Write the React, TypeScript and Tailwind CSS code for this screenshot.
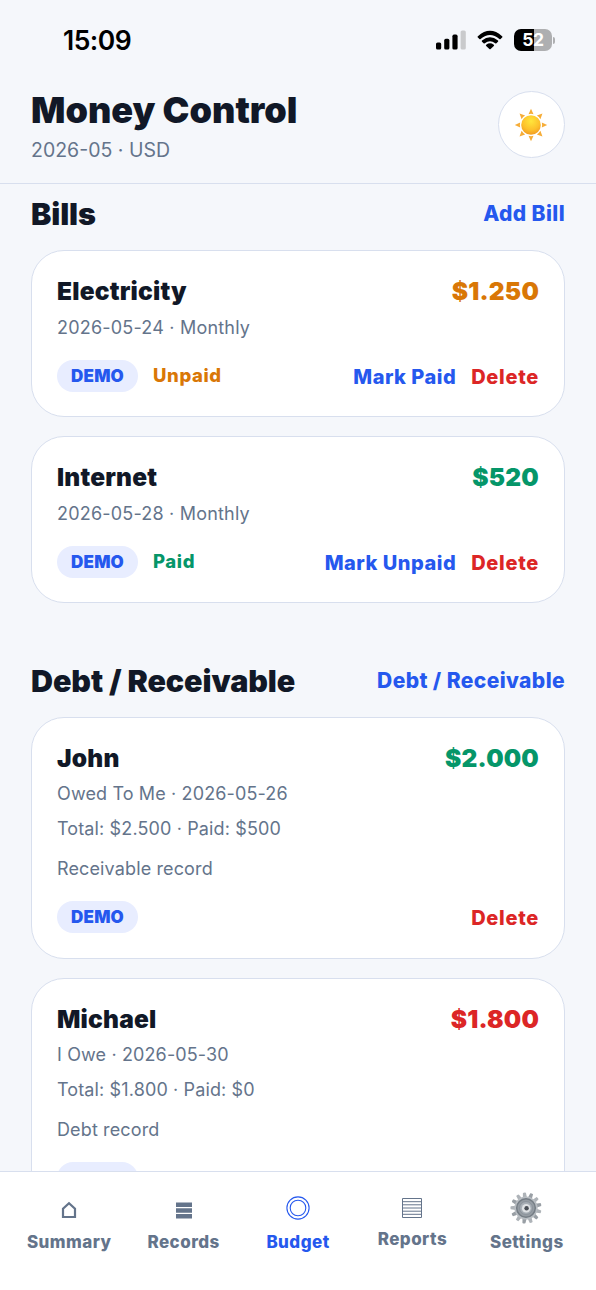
import type { ReactNode } from 'react'

type Tone = 'amber' | 'green' | 'red'

const toneClass: Record<Tone, string> = {
  amber: 'text-[#d97706]',
  green: 'text-[#059669]',
  red: 'text-[#dc2626]',
}

type Bill = {
  name: string
  amount: string
  due: string
  status: string
  tone: Tone
  action: string
}

type Debt = {
  name: string
  amount: string
  info: string
  totals: string
  note: string
  tone: Tone
}

const bills: Bill[] = [
  { name: 'Electricity', amount: '$1.250', due: '2026-05-24 · Monthly', status: 'Unpaid', tone: 'amber', action: 'Mark Paid' },
  { name: 'Internet', amount: '$520', due: '2026-05-28 · Monthly', status: 'Paid', tone: 'green', action: 'Mark Unpaid' },
]

const debts: Debt[] = [
  {
    name: 'John',
    amount: '$2.000',
    info: 'Owed To Me · 2026-05-26',
    totals: 'Total: $2.500 · Paid: $500',
    note: 'Receivable record',
    tone: 'green',
  },
  {
    name: 'Michael',
    amount: '$1.800',
    info: 'I Owe · 2026-05-30',
    totals: 'Total: $1.800 · Paid: $0',
    note: 'Debt record',
    tone: 'red',
  },
]

function StatusBar() {
  return (
    <div className="flex h-20 items-center justify-between pr-[41px] pl-[63px]">
      <span className="text-[26.5px] leading-8 font-semibold tracking-[-0.5px] text-black">15:09</span>
      <div className="flex items-center">
        <svg width="30" height="20" viewBox="0 0 30 20">
          <rect x="0" y="12.5" width="5.2" height="7" rx="1.6" />
          <rect x="8.2" y="8.8" width="5.2" height="10.7" rx="1.6" />
          <rect x="16.4" y="4.6" width="5.2" height="14.9" rx="1.6" />
          <rect x="24.6" y="0.5" width="5.2" height="19" rx="1.6" fill="#c9cacc" />
        </svg>
        <svg className="ml-[11px]" width="26" height="20" viewBox="0 0 26 20">
          <path d="M0.9 6.2 Q13 -4.6 25.1 6.2 Q25.8 6.9 25.1 7.5 L23.6 9 Q23 9.5 22.4 9 Q13 0.8 3.6 9 Q3 9.5 2.4 9 L0.9 7.5 Q0.2 6.9 0.9 6.2Z" />
          <path d="M5 10.5 Q13 3.9 21 10.5 Q21.6 11.1 21 11.7 L19.4 13.2 Q18.8 13.7 18.2 13.2 Q13 9.1 7.8 13.2 Q7.2 13.7 6.6 13.2 L5 11.7 Q4.4 11.1 5 10.5Z" />
          <path d="M9.2 14.7 Q13 12 16.8 14.7 Q17.4 15.3 16.8 15.9 L13.6 19 Q13 19.5 12.4 19 L9.2 15.9 Q8.6 15.3 9.2 14.7Z" />
        </svg>
        <div className="ml-[11px] flex h-[22px] w-[38px] items-center justify-center rounded-[7px] bg-[linear-gradient(90deg,#000_52%,#aeafb1_52%)] text-[17.5px] leading-none font-bold tracking-[-0.3px] text-white">
          52
        </div>
        <div className="ml-px h-[7px] w-[2px] rounded-r-full bg-[#aeafb1]" />
      </div>
    </div>
  )
}

function SunIcon() {
  return (
    <svg className="-ml-px" width="34" height="34" viewBox="0 0 34 34">
      <defs>
        <radialGradient id="sun" cx="0.5" cy="0.3" r="0.75">
          <stop offset="0" stopColor="#ffe63c" />
          <stop offset="0.6" stopColor="#fdc02b" />
          <stop offset="1" stopColor="#ee9420" />
        </radialGradient>
      </defs>
      {[0, 45, 90, 135, 180, 225, 270, 315].map((angle) => (
        <path key={angle} d="M17 0.8 L19.5 6.2 Q17 5.5 14.5 6.2Z" fill="#f6ac36" transform={`rotate(${angle} 17 17)`} />
      ))}
      <circle cx="17" cy="17" r="9.8" fill="url(#sun)" />
    </svg>
  )
}

function Header() {
  return (
    <header className="h-[184px] shrink-0 border-b border-[#d8dfee]">
      <StatusBar />
      <div className="flex justify-between px-[31px]">
        <div className="pt-2.5">
          <h1 className="text-[36px] leading-10 font-black text-[#111827]">Money Control</h1>
          <p className="mt-2 text-[19.5px] leading-6 text-[#64748b]">2026-05 · USD</p>
        </div>
        <button className="mt-[11px] flex size-[67px] items-center justify-center rounded-full border border-[#d8dfee] bg-white">
          <SunIcon />
        </button>
      </div>
    </header>
  )
}

function SectionHeader({ title, action }: { title: string; action: string }) {
  return (
    <div className="flex h-10 items-center justify-between">
      <h2 className="text-[30.5px] leading-10 font-black tracking-[-0.1px] text-[#111827]">{title}</h2>
      <button className="text-[21px] leading-7 font-extrabold tracking-[0.4px] text-[#2558ee]">{action}</button>
    </div>
  )
}

function Card({ name, amount, tone, children }: { name: string; amount: string; tone: Tone; children: ReactNode }) {
  return (
    <article className="rounded-[33px] border border-[#d8dfee] bg-white px-[25px] pt-6">
      <div className="flex h-8 items-center justify-between">
        <h3 className="text-[24.5px] font-black tracking-[0.2px] text-[#111827]">{name}</h3>
        <span className={`text-[24.5px] font-black tracking-[0.2px] ${toneClass[tone]}`}>{amount}</span>
      </div>
      {children}
    </article>
  )
}

function DemoPill() {
  return (
    <span className="flex h-8 w-[81px] items-center justify-center rounded-full bg-[#e8edff] pt-0.5 text-[17px] font-black tracking-[0.2px] text-[#2558ee]">
      DEMO
    </span>
  )
}

function BillCard({ bill }: { bill: Bill }) {
  return (
    <Card name={bill.name} amount={bill.amount} tone={bill.tone}>
      <p className="mt-[9px] text-[18px] leading-6 tracking-[0.2px] text-[#64748b]">{bill.due}</p>
      <div className="mt-5 mb-6 flex h-8 items-center">
        <DemoPill />
        <span className={`ml-[15px] text-[18.5px] font-extrabold tracking-[0.6px] ${toneClass[bill.tone]}`}>
          {bill.status}
        </span>
        <button className="ml-auto pt-px text-[20px] leading-8 font-extrabold tracking-[0.5px] text-[#2558ee]">
          {bill.action}
        </button>
        <button className="ml-[15px] pt-px text-[20px] leading-8 font-extrabold tracking-[0.7px] text-[#dc2626]">
          Delete
        </button>
      </div>
    </Card>
  )
}

function DebtCard({ debt }: { debt: Debt }) {
  return (
    <Card name={debt.name} amount={debt.amount} tone={debt.tone}>
      <div className="text-[18px] leading-6 tracking-[0.13px] text-[#64748b]">
        <p className="mt-2">{debt.info}</p>
        <p className="mt-[11px]">{debt.totals}</p>
        <p className="mt-4">{debt.note}</p>
      </div>
      <div className="mt-5 mb-[25px] flex h-8 items-center justify-between">
        <DemoPill />
        <button className="pt-0.5 text-[20px] leading-8 font-extrabold tracking-[0.7px] text-[#dc2626]">Delete</button>
      </div>
    </Card>
  )
}

function HomeIcon() {
  return (
    <svg className="mt-1" width="16" height="18" viewBox="0 0 16 18" fill="none" stroke="currentColor" strokeWidth="2.2">
      <path d="M2 16 V7.8 L8 2.2 L14 7.8 V16Z" />
    </svg>
  )
}

function RecordsIcon() {
  return (
    <svg className="mt-1" width="16" height="17" viewBox="0 0 16 17" fill="currentColor">
      <path d="M0 0.4h16v4.6H0zM0 6.2h16v4.6H0zM0 12h16v4.6H0z" />
    </svg>
  )
}

function BudgetIcon() {
  return (
    <svg width="24" height="24" viewBox="0 0 24 24" fill="none" stroke="currentColor" strokeWidth="1.1">
      <circle cx="12" cy="12" r="11.1" />
      <circle cx="12" cy="12" r="7.8" />
    </svg>
  )
}

function ReportsIcon() {
  return (
    <svg width="20" height="20" viewBox="0 0 20 20" fill="none" stroke="currentColor" strokeWidth="1">
      <path d="M0.5 0.5h19v19h-19zM0 3.7h20M0 6.8h20M0 10h20M0 13.2h20M0 16.3h20" />
    </svg>
  )
}

function GearIcon() {
  return (
    <svg className="-ml-px" width="32" height="32" viewBox="0 0 32 32">
      {Array.from({ length: 13 }, (_, i) => (
        <path
          key={i}
          d="M13.9 6 L14.5 0.7 Q16 0.1 17.5 0.7 L18.1 6Z"
          fill={i % 2 ? '#999fa5' : '#aeb3b8'}
          transform={`rotate(${i * 27.69 - 6} 16 16)`}
        />
      ))}
      <circle cx="16" cy="16" r="11.6" fill="#b9bec3" />
      <circle cx="16" cy="16" r="9.3" fill="#959ca3" stroke="#757d85" strokeWidth="1.5" />
      <circle cx="16" cy="16" r="6.4" fill="#a8afb6" stroke="#858d95" strokeWidth="0.8" />
      <circle cx="16.2" cy="16.2" r="4.3" fill="#dfe2e5" />
      <circle cx="16.6" cy="16.3" r="2.2" fill="#4a4f56" />
    </svg>
  )
}

const tabs: Array<{ label: string; icon: ReactNode; active?: boolean; raised?: boolean }> = [
  { label: 'Summary', icon: <HomeIcon /> },
  { label: 'Records', icon: <RecordsIcon /> },
  { label: 'Budget', icon: <BudgetIcon />, active: true },
  { label: 'Reports', icon: <ReportsIcon />, raised: true },
  { label: 'Settings', icon: <GearIcon /> },
]

function TabBar() {
  return (
    <nav className="grid h-[119px] shrink-0 grid-cols-5 border-t border-[#d8dfee] bg-white px-3 pt-[18px]">
      {tabs.map((tab) => (
        <button
          key={tab.label}
          className={`flex flex-col items-center ${tab.active ? 'text-[#2558ee]' : 'text-[#64748b]'}`}
        >
          <span className="flex h-9 items-center justify-center">{tab.icon}</span>
          <span
            className={`text-[17px] leading-5 font-extrabold tracking-[0.45px] ${tab.raised ? 'mt-[3px]' : 'mt-1.5'}`}
          >
            {tab.label}
          </span>
        </button>
      ))}
    </nav>
  )
}

export default function App() {
  return (
    <div className="flex h-[1290px] w-[596px] flex-col overflow-hidden bg-[#f5f7fb] font-['Inter',sans-serif]">
      <Header />
      <main className="min-h-0 flex-1 overflow-hidden px-[31px] pt-2.5">
        <SectionHeader title="Bills" action="Add Bill" />
        <div className="mt-4 flex flex-col gap-[19px]">
          {bills.map((bill) => (
            <BillCard key={bill.name} bill={bill} />
          ))}
        </div>
        <div className="mt-[58px]">
          <SectionHeader title="Debt / Receivable" action="Debt / Receivable" />
        </div>
        <div className="mt-4 flex flex-col gap-[19px]">
          {debts.map((debt) => (
            <DebtCard key={debt.name} debt={debt} />
          ))}
        </div>
      </main>
      <TabBar />
    </div>
  )
}
